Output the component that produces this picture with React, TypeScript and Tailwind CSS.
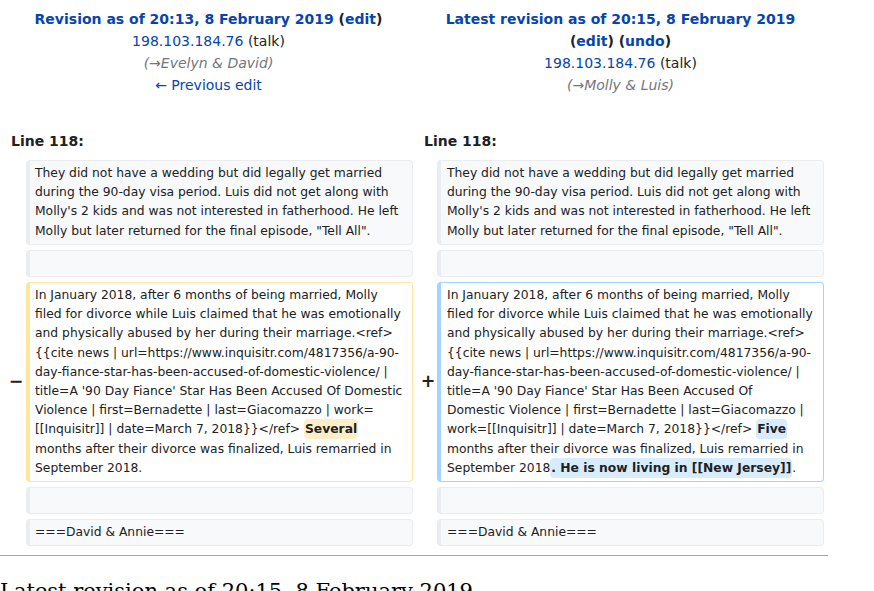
import React from "react";

const link = "text-[#0645ad]";
const box = "rounded-[4px] border border-l-4 py-[3px] text-[12.32px] leading-[19.2px] break-words";
const ctx = box + " px-[5px] bg-[#f8f9fa] border-[#eaecf0]";
const ctxR = box + " pl-[6px] pr-[5px] bg-[#f8f9fa] border-[#eaecf0]";
const del = box + " px-[5px] bg-white border-[#ffe49c]";
const add = box + " pl-[6px] pr-[6px] bg-white border-[#a3d3ff]";
const marker = "flex items-center justify-center pl-[6px] text-[17.5px] font-bold leading-none";

export default function App() {
  return (
    <div className="font-['DejaVu_Sans',sans-serif] text-[#202122] bg-white min-h-[591px] overflow-hidden">
      <div className="w-[828px] px-[4px]">
        <div className="grid grid-cols-[18px_387px_16px_387px] gap-x-[4px] pt-[8px] text-[14px] leading-[22px] text-center">
          <div className="col-span-2">
            <div className="font-bold">
              <span className={link}>Revision as of 20:13, 8 February 2019</span> (<span className={link}>edit</span>)
            </div>
            <div>
              <span className={link}>198.103.184.76</span> (<span>talk</span>)
            </div>
            <div className="italic text-[#72777d]">(→Evelyn &amp; David)</div>
            <div className={link}>← Previous edit</div>
          </div>
          <div className="col-span-2">
            <div className="font-bold">
              <span className={link}>Latest revision as of 20:15, 8 February 2019</span>
            </div>
            <div className="font-bold">
              (<span className={link}>edit</span>) (<span className={link}>undo</span>)
            </div>
            <div>
              <span className={link}>198.103.184.76</span> (<span>talk</span>)
            </div>
            <div className="italic text-[#72777d]">(→Molly &amp; Luis)</div>
          </div>
        </div>

        <div className="grid grid-cols-[18px_387px_16px_387px] gap-x-[4px] mt-[34px] text-[14px] leading-[22px] font-bold">
          <div className="col-span-2 pl-[7px]">Line 118:</div>
          <div className="col-span-2 pl-[7px]">Line 118:</div>
        </div>

        <div className="grid grid-cols-[18px_387px_16px_387px] gap-x-[4px] gap-y-[5px] mt-[8px]">
          <div />
          <div className={ctx}>
            They did not have a wedding but did legally get married during the 90-day visa period. Luis did not get along with Molly's 2 kids and was not interested in fatherhood. He left Molly but later returned for the final episode, "Tell All".
          </div>
          <div />
          <div className={ctxR}>
            They did not have a wedding but did legally get married during the 90-day visa period. Luis did not get along with Molly's 2 kids and was not interested in fatherhood. He left Molly but later returned for the final episode, "Tell All".
          </div>

          <div />
          <div className={ctx}>
            <br />
          </div>
          <div />
          <div className={ctxR}>
            <br />
          </div>

          <div className={marker}>−</div>
          <div className={del}>
            In January 2018, after 6 months of being married, Molly filed for divorce while Luis claimed that he was emotionally and physically abused by her during their marriage.&lt;ref&gt;<wbr />{"{{"}cite news | url=https://www.inquisitr.com/4817356/a-90-day-fiance-star-has-been-accused-of-domestic-violence/ | title=A '90 Day Fiance' Star Has Been Accused Of Domestic Violence | first=Bernadette | last=Giacomazzo | work=<wbr />[[Inquisitr]] | date=March 7, 2018{"}}"}&lt;/ref&gt;{" "}
            <span className="font-bold bg-[#feeec8] rounded-[4px] px-[1px] py-[3px]">Several</span> months after their divorce was finalized, Luis remarried in September 2018.
          </div>
          <div className={marker}>+</div>
          <div className={add}>
            In January 2018, after 6 months of being married, Molly filed for divorce while Luis claimed that he was emotionally and physically abused by her during their marriage.&lt;ref&gt;<wbr />{"{{"}cite news | url=https://www.inquisitr.com/4817356/a-90-day-fiance-star-has-been-accused-of-domestic-violence/ | title=A '90 Day Fiance' Star Has Been Accused Of
            <br />
            Domestic Violence | first=Bernadette | last=Giacomazzo | work=<wbr />[[Inquisitr]] | date=March 7, 2018{"}}"}&lt;/ref&gt;{" "}
            <span className="font-bold bg-[#d8ecff] rounded-[4px] px-[1px] py-[3px]">Five</span> months after their divorce was finalized, Luis remarried in September 2018
            <span className="font-bold bg-[#d8ecff] rounded-[4px] px-[1px] py-[3px]">. He is now living in [[New Jersey]]</span>.
          </div>

          <div />
          <div className={ctx}>
            <br />
          </div>
          <div />
          <div className={ctxR}>
            <br />
          </div>

          <div />
          <div className={ctx}>===David &amp; Annie===</div>
          <div />
          <div className={ctxR}>===David &amp; Annie===</div>
        </div>
      </div>
      <div className="w-[828px] h-px bg-[#a2a9b1] mt-[9px]" />
      <h2 className="font-['DejaVu_Serif',serif] text-[21px] leading-[26px] mt-[22px] text-[#000]">
        Latest revision as of 20:15, 8 February 2019
      </h2>
    </div>
  );
}
